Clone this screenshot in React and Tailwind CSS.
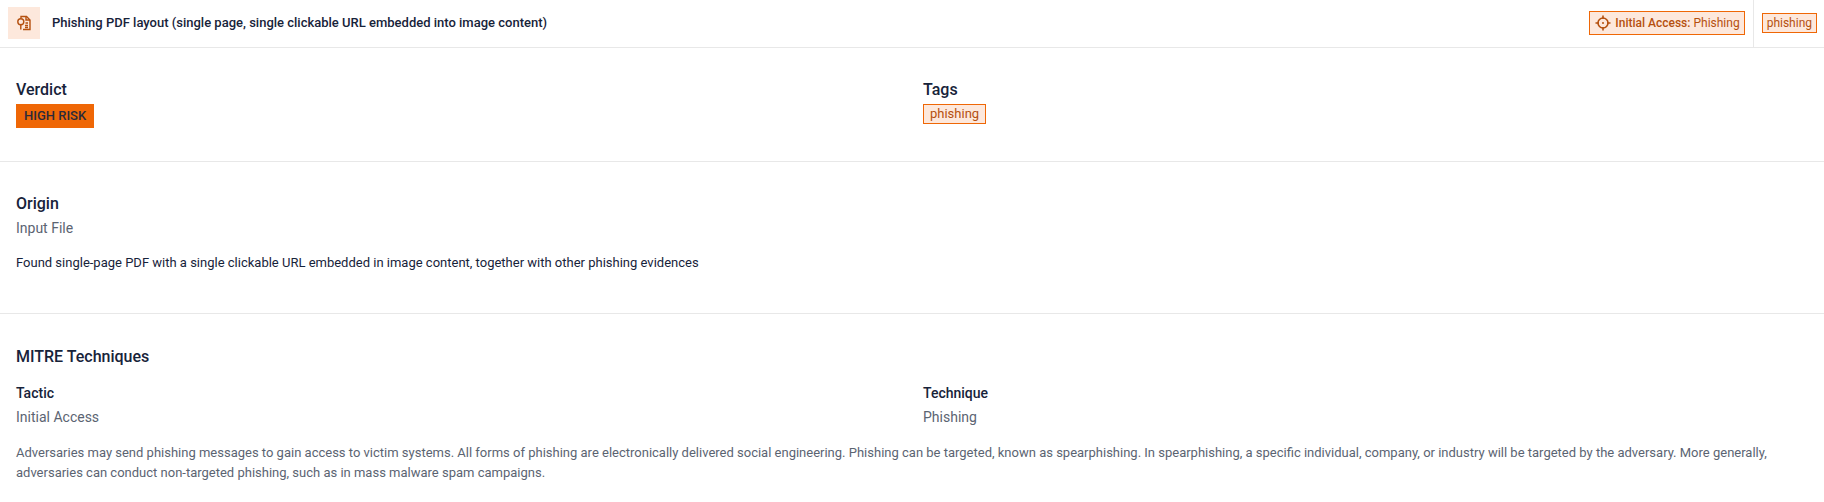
import React from 'react';

const font = { fontFamily: 'Roboto, sans-serif' };

const Tag = ({ children, className = '' }) => (
  <span className={`inline-flex items-center border border-[#ef6706] bg-[#fde8dc] text-[#b5500f] ${className}`}>
    {children}
  </span>
);

const PdfIcon = () => (
  <svg width="16" height="16" viewBox="0 0 16 16" fill="none" stroke="#b5500f" strokeWidth="1.4">
    <path d="M5 3V1.5h5.5L14 5v9.5H7" />
    <path d="M10 1.5V5h4" />
    <circle cx="4.8" cy="6.8" r="3" />
    <path d="M4.8 9.8V14.5M9.5 8H12M9 10.5h3M9 12.5h3" />
  </svg>
);

const TargetIcon = () => (
  <svg width="16" height="16" viewBox="0 0 16 16" fill="none" stroke="#b5500f" strokeWidth="1.6">
    <circle cx="8" cy="8" r="5" />
    <path d="M8 0.5V4M8 12V15.5M0.5 8H4M12 8H15.5" />
    <circle cx="8" cy="8" r="1" fill="#b5500f" stroke="none" />
  </svg>
);

export default function App() {
  return (
    <div className="bg-white text-[#17233a] w-[1824px] h-[502px] overflow-hidden font-['Roboto',sans-serif]" style={font}>
      {/* header row */}
      <div className="flex items-center h-[48px] border-b border-[#e8e8e8]">
        <div className="ml-[8px] mb-[1px] w-[32px] h-[32px] bg-[#fde8dc] flex items-center justify-center">
          <PdfIcon />
        </div>
        <div className="ml-[12px] mb-[1px] text-[13px] font-medium flex-1">
          Phishing PDF layout (single page, single clickable URL embedded into image content)
        </div>
        <Tag className="h-[24px] mb-[1px] pl-[5px] pr-[4px] gap-[4px] text-[12px] mr-[8px]">
          <TargetIcon />
          <span><span className="font-medium">Initial Access:</span> Phishing</span>
        </Tag>
        <div className="h-[47px] pb-[1px] border-l border-[#e8e8e8] flex items-center pl-[8px] pr-[7px]">
          <Tag className="h-[20px] px-[4px] text-[12px]">phishing</Tag>
        </div>
      </div>

      {/* verdict + tags */}
      <div className="grid grid-cols-2 gap-[22px] px-[16px] pt-[32px] h-[114px] border-b border-[#e8e8e8]">
        <div>
          <div className="text-[16px] font-medium leading-[20px]">Verdict</div>
          <div className="mt-[4px] inline-flex items-center h-[24px] px-[8px] bg-[#ef6706] text-[13px] font-medium text-[#2b2a3a]">HIGH RISK</div>
        </div>
        <div>
          <div className="text-[16px] font-medium leading-[20px]">Tags</div>
          <Tag className="mt-[4px] h-[20px] px-[6px] text-[13px]">phishing</Tag>
        </div>
      </div>

      {/* origin */}
      <div className="px-[16px] pt-[32px] h-[152px] border-b border-[#e8e8e8]">
        <div className="text-[16px] font-medium leading-[20px]">Origin</div>
        <div className="text-[14px] text-[#5b6472] leading-[20px] mt-[4px]">Input File</div>
        <div className="text-[13px] leading-[18px] mt-[16px]">
          Found single-page PDF with a single clickable URL embedded in image content, together with other phishing evidences
        </div>
      </div>

      {/* mitre */}
      <div className="px-[16px] pt-[33px]">
        <div className="text-[16px] font-medium leading-[20px]">MITRE Techniques</div>
        <div className="grid grid-cols-2 gap-[22px] mt-[16px]">
          <div>
            <div className="text-[14px] font-medium leading-[20px]">Tactic</div>
            <div className="text-[14px] text-[#5b6472] leading-[20px] mt-[4px]">Initial Access</div>
          </div>
          <div>
            <div className="text-[14px] font-medium leading-[20px]">Technique</div>
            <div className="text-[14px] text-[#5b6472] leading-[20px] mt-[4px]">Phishing</div>
          </div>
        </div>
        <p className="text-[13px] text-[#5b6472] leading-[20px] mt-[16px]">
          Adversaries may send phishing messages to gain access to victim systems. All forms of phishing are electronically delivered social engineering. Phishing can be targeted, known as spearphishing. In spearphishing, a specific individual, company, or industry will be targeted by the adversary. More generally, adversaries can conduct non-targeted phishing, such as in mass malware spam campaigns.
        </p>
      </div>
    </div>
  );
}
